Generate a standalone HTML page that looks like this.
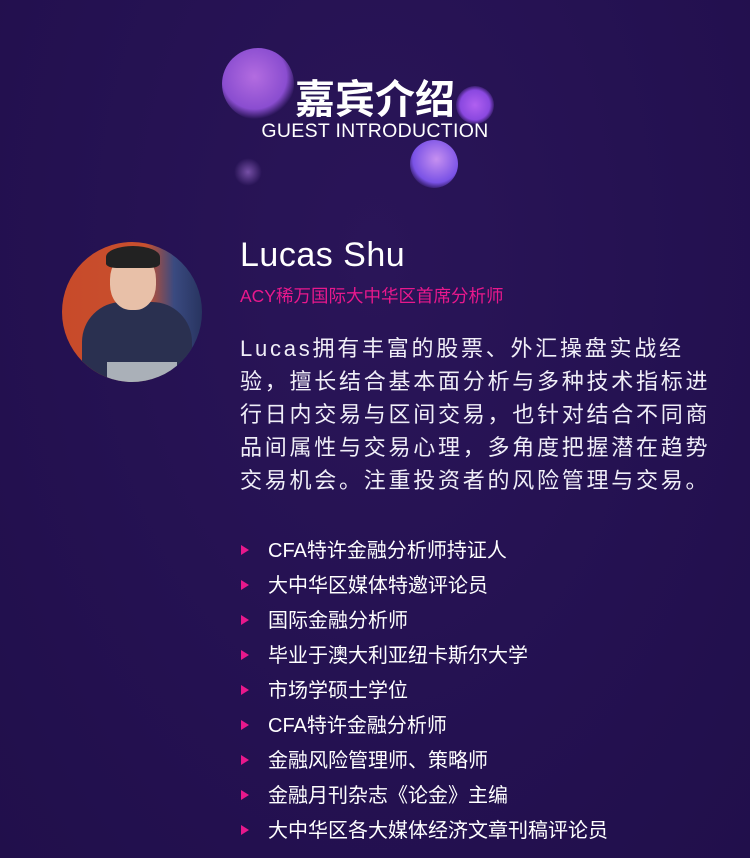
<!DOCTYPE html>
<html><head><meta charset="utf-8"><style>
body{margin:0;width:750px;height:858px;overflow:hidden;background:#241150;font-family:"Liberation Sans","Noto Sans CJK SC",sans-serif;position:relative;
background:radial-gradient(ellipse at 50% 30%,#2a1558 0%,#241151 60%,#210f4b 100%);}
.b{position:absolute;border-radius:50%}
.t{position:absolute;color:#fff}
ul{position:absolute;left:240px;top:537px;margin:0;padding:0;list-style:none}
li{height:35px;line-height:28px;font-size:20px;color:#fff;position:relative;padding-left:28px}
li:before{content:"";position:absolute;left:1px;top:8px;border-left:8px solid #e8188c;border-top:5px solid transparent;border-bottom:5px solid transparent}
</style></head><body>
<div class="b" style="left:222px;top:48px;width:72px;height:72px;background:radial-gradient(circle at 45% 40%,#b36ce0,#8a4dd0 55%,rgba(120,60,200,0) 72%)"></div>
<div class="b" style="left:456px;top:86px;width:38px;height:38px;background:radial-gradient(circle,#b060f0,#8a48e0 55%,rgba(110,60,220,0) 75%)"></div>
<div class="b" style="left:410px;top:140px;width:48px;height:48px;background:radial-gradient(circle at 55% 40%,#c690f0,#7a52e6 60%,rgba(100,70,220,0) 78%)"></div>
<div class="b" style="left:234px;top:158px;width:28px;height:28px;background:radial-gradient(circle,rgba(170,120,220,.6),rgba(120,80,200,0) 70%)"></div>
<div class="t" style="left:0;width:750px;text-align:center;top:67px;font-size:40px;font-weight:bold">嘉宾介绍</div>
<div class="t" style="left:0;width:750px;text-align:center;top:120px;font-size:19.5px;letter-spacing:0.3px">GUEST INTRODUCTION</div>
<div class="b" style="left:62px;top:242px;width:140px;height:140px;overflow:hidden;background:linear-gradient(90deg,#c84a2a 0%,#c8502e 60%,#3a4a80 80%,#283460 100%)">
<div style="position:absolute;left:20px;top:60px;width:110px;height:90px;background:#2a3050;border-radius:40px 40px 0 0"></div>
<div style="position:absolute;left:48px;top:12px;width:46px;height:56px;background:#e8c0a8;border-radius:45%"></div>
<div style="position:absolute;left:44px;top:4px;width:54px;height:22px;background:#222;border-radius:50% 50% 20% 20%"></div>
<div style="position:absolute;left:45px;top:120px;width:70px;height:30px;background:#aab0b8"></div>
</div>
<div class="t" style="left:240px;top:236px;font-size:34px;letter-spacing:0.5px">Lucas Shu</div>
<div class="t" style="left:240px;top:283px;font-size:17.5px;color:#e8188c">ACY稀万国际大中华区首席分析师</div>
<div class="t" style="left:240px;top:332px;width:520px;white-space:nowrap;font-size:22px;line-height:33px;letter-spacing:2.75px;color:#f0eef8">Lucas拥有丰富的股票、外汇操盘实战经<br>验，擅长结合基本面分析与多种技术指标进<br>行日内交易与区间交易，也针对结合不同商<br>品间属性与交易心理，多角度把握潜在趋势<br>交易机会。注重投资者的风险管理与交易。</div>
<ul>
<li>CFA特许金融分析师持证人</li>
<li>大中华区媒体特邀评论员</li>
<li>国际金融分析师</li>
<li>毕业于澳大利亚纽卡斯尔大学</li>
<li>市场学硕士学位</li>
<li>CFA特许金融分析师</li>
<li>金融风险管理师、策略师</li>
<li>金融月刊杂志《论金》主编</li>
<li>大中华区各大媒体经济文章刊稿评论员</li>
</ul>
</body></html>
